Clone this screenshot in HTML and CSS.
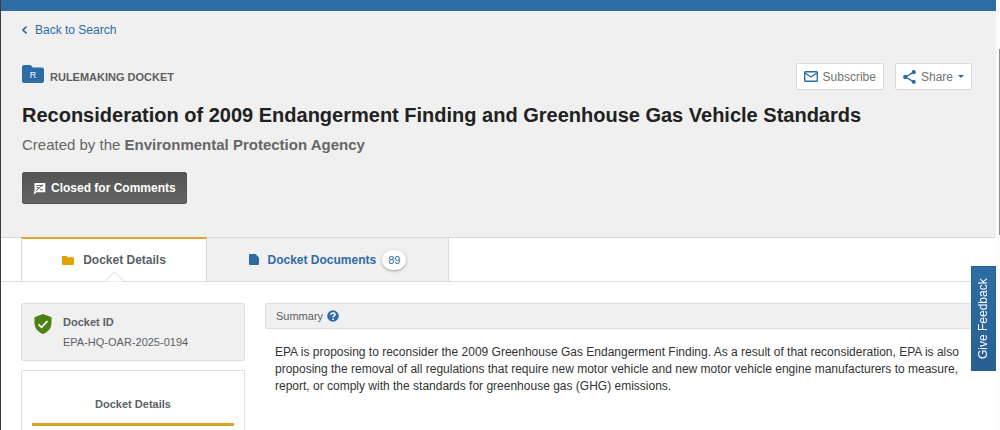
FILE: index.html
```html
<!DOCTYPE html>
<html lang="en">

<head>
    <meta charset="UTF-8">
    <meta name="viewport" content="width=device-width, initial-scale=1">
    <title>Reconsideration of 2009 Endangerment Finding and Greenhouse Gas Vehicle Standards</title>
    <link rel="stylesheet" href="styles.css">
</head>

<body>
    <div class="page">
        <div class="top-bar"></div>

        <header class="hero">
            <a href="#" class="back-link">
                <svg width="6" height="8" viewBox="0 0 6 8"><path d="M4.500 .6 1 4l3.500 3.400" fill="none" stroke="currentColor" stroke-width="1.600"/></svg>
                Back to Search
            </a>

            <div class="hero-row">
                <div class="docket-type">
                    <span class="folder-badge">
                        <svg width="22" height="18" viewBox="0 0 22 18"><path d="M2 0h6.500l2.500 2.500H20a2 2 0 0 1 2 2V16a2 2 0 0 1-2 2H2a2 2 0 0 1-2-2V2a2 2 0 0 1 2-2z" fill="#2e6da4"/></svg>
                        <span class="folder-letter">R</span>
                    </span>
                    <span class="type-name">RULEMAKING DOCKET</span>
                </div>
                <div class="actions">
                    <button type="button" class="btn-action">
                        <svg width="14" height="11" viewBox="0 0 14 11"><rect x=".7" y=".7" width="12.600" height="9.600" rx=".8" fill="none" stroke="#2e6da4" stroke-width="1.400"/><path d="M1 2l6 4 6-4" fill="none" stroke="#2e6da4" stroke-width="1.400"/></svg>
                        Subscribe
                    </button>
                    <button type="button" class="btn-action">
                        <svg width="13" height="14" viewBox="0 0 13 14"><path d="M10.500 2.300 2.500 7l8 4.700" fill="none" stroke="#2e6da4" stroke-width="1.400"/><g fill="#2e6da4"><circle cx="10.700" cy="2.200" r="2.100"/><circle cx="2.300" cy="7" r="2.200"/><circle cx="10.700" cy="11.800" r="2.100"/></g></svg>
                        Share
                        <span class="caret"></span>
                    </button>
                </div>
            </div>

            <h1>Reconsideration of 2009 Endangerment Finding and Greenhouse Gas Vehicle Standards</h1>
            <p class="created-by">Created by the <strong>Environmental Protection Agency</strong></p>

            <button type="button" class="btn-closed">
                <svg width="13" height="13" viewBox="0 0 13 13"><path d="M1.500 1h10.800v9.200H3.600L.5 12.800 1.500 9z" fill="#fff"/><path d="M3.500 3.500H10M3.500 5.700h3M7 7.700h3M2.800 9l7.400-6.500" fill="none" stroke="#5c5c5c"/></svg>
                Closed for Comments
            </button>
        </header>

        <nav class="tabs">
            <a href="#" class="tab active">
                <svg width="12" height="9" viewBox="0 0 12 9"><path d="M1 0h3.700l1.300 1.200h5a1 1 0 0 1 1 1V8a1 1 0 0 1-1 1H1a1 1 0 0 1-1-1V1a1 1 0 0 1 1-1z" fill="#e5a000"/></svg>
                Docket Details
            </a>
            <a href="#" class="tab">
                <svg width="10" height="11" viewBox="0 0 10 11"><path d="M1 0h5.600L10 3.400V10a1 1 0 0 1-1 1H1a1 1 0 0 1-1-1V1a1 1 0 0 1 1-1z" fill="#2e6da4"/></svg>
                <span class="tab-name">Docket Documents <span class="count">89</span></span>
            </a>
        </nav>

        <main class="content">
            <aside class="sidebar">
                <div class="docket-id">
                    <svg width="18" height="20" viewBox="0 0 18 20"><path d="M9 0l8.500 3.300V9c0 5-3.500 9.300-8.500 11C4 18.300.5 14 .5 9V3.300z" fill="#4d8015"/><path d="M4.500 10.300l3 3 6-6.300" fill="none" stroke="#fff" stroke-width="1.700"/></svg>
                    <div>
                        <h2>Docket ID</h2>
                        <p>EPA-HQ-OAR-2025-0194</p>
                    </div>
                </div>
                <div class="details-card">
                    <h2>Docket Details</h2>
                </div>
            </aside>

            <section class="summary">
                <div class="summary-head">
                    Summary
                    <svg width="12" height="12" viewBox="0 0 12 12"><circle cx="6" cy="6" r="5.800" fill="#2e6da4"/><path d="M4 4.700C4 2.300 8 2.400 8 4.600 8 5.900 6.100 5.800 6.100 7.300" fill="none" stroke="#fff" stroke-width="1.500"/><circle cx="6.100" cy="9.200" r=".9" fill="#fff"/></svg>
                </div>
                <p class="summary-text">EPA is proposing to reconsider the 2009 Greenhouse Gas Endangerment Finding. As a result of that reconsideration, EPA is also proposing the removal of all regulations that require new motor vehicle and new motor vehicle engine manufacturers to measure, report, or comply with the standards for greenhouse gas (GHG) emissions.</p>
            </section>
        </main>
    </div>

    <div class="scroll-gutter">
        <div class="scroll-thumb"></div>
    </div>

    <button type="button" class="feedback">Give Feedback</button>
</body>

</html>
```

FILE: styles.css
```css
* {
    margin: 0;
    padding: 0;
    box-sizing: border-box;
}

body {
    font-family: "Liberation Sans", Arial, sans-serif;
    font-size: 12px;
    color: #5b5f66;
    background-color: #fff;
    min-height: 100vh;
    display: flex;
    border-left: 1px solid #3f3c3c;
}

a {
    color: #2e6da4;
    text-decoration: none;
}

button {
    font-family: inherit;
    cursor: pointer;
}

svg {
    display: block;
    flex-shrink: 0;
}

.page {
    flex: 1;
    min-width: 0;
    display: flex;
    flex-direction: column;
}

.top-bar {
    height: 11px;
    background-color: #2e6da4;
}

/* Header */
.hero {
    background-color: #f0f0f0;
    padding: 12px 24px 33px 21px;
}

.back-link {
    display: inline-flex;
    align-items: center;
    gap: 7px;
    font-size: 12px;
    line-height: 14px;
}

.hero-row {
    display: flex;
    justify-content: space-between;
    margin-top: 26px;
}

.docket-type {
    display: flex;
    gap: 6px;
    padding-top: 2px;
}

.folder-badge {
    position: relative;
    height: 18px;
}

.folder-letter {
    position: absolute;
    top: 5px;
    left: 0;
    width: 100%;
    text-align: center;
    font-size: 9px;
    line-height: 10px;
    color: #fff;
}

.type-name {
    font-size: 11px;
    font-weight: bold;
    line-height: 14px;
    padding-top: 5px;
    color: #5f5f5f;
}

.actions {
    display: flex;
    gap: 11px;
}

.btn-action {
    display: flex;
    align-items: center;
    gap: 5px;
    height: 27px;
    padding: 0 7px;
    font-size: 12px;
    color: #737373;
    background-color: #fff;
    border: 1px solid #d9d9d9;
    border-radius: 2px;
}

.caret {
    border-top: 3px solid #2e6da4;
    border-left: 3px solid transparent;
    border-right: 3px solid transparent;
}

h1 {
    font-size: 20px;
    line-height: 26px;
    color: #212121;
    margin-top: 12px;
}

.created-by {
    font-size: 15px;
    line-height: 18px;
    margin-top: 8px;
    color: #666;
}

.btn-closed {
    display: flex;
    align-items: center;
    gap: 5px;
    height: 32px;
    margin-top: 18px;
    padding: 0 10px;
    font-size: 12px;
    font-weight: bold;
    color: #fff;
    background: linear-gradient(#545454, #646464);
    border: 1px solid #555;
    border-radius: 2px;
}

/* Tabs */
.tabs {
    display: flex;
    height: 45px;
    padding-left: 20px;
    border-top: 1px solid #d9d9d9;
    border-bottom: 1px solid #dedede;
}

.tab {
    position: relative;
    display: flex;
    align-items: center;
    justify-content: center;
    gap: 9px;
    width: 242px;
    background-color: #f0f0f0;
    border-right: 1px solid #d9d9d9;
    font-size: 12px;
    font-weight: bold;
}

.tab.active {
    width: 186px;
    margin-top: -1px;
    background-color: #fff;
    border-left: 1px solid #d9d9d9;
    border-top: 2px solid #e0a52c;
    color: #5b5f66;
}

/* notch under the active tab */
.tab.active::after {
    content: "";
    position: absolute;
    bottom: -8px;
    left: 50%;
    width: 14px;
    height: 14px;
    margin-left: -7px;
    background-color: #fff;
    border-top: 1px solid #d9d9d9;
    border-left: 1px solid #d9d9d9;
    transform: rotate(45deg);
    clip-path: polygon(0 0, 100% 0, 0 100%);
}

.tab-name {
    display: flex;
    align-items: center;
    gap: 6px;
}

.count {
    padding: 0 6px;
    line-height: 20px;
    font-size: 11px;
    font-weight: normal;
    background-color: #fff;
    border-radius: 10px;
    box-shadow: 0 1px 3px rgba(0, 0, 0, 0.35);
}

/* Content */
.content {
    flex: 1;
    display: flex;
    gap: 20px;
    padding: 21px 22px 0 20px;
}

.sidebar {
    display: flex;
    flex-direction: column;
    width: 224px;
    flex-shrink: 0;
}

.docket-id {
    display: flex;
    gap: 11px;
    height: 58px;
    padding: 10px 12px;
    background-color: #f0f0f0;
    border: 1px solid #dedede;
    border-radius: 2px;
}

.sidebar h2 {
    font-size: 11px;
    line-height: 16px;
}

.docket-id p {
    font-size: 11px;
    line-height: 16px;
    margin-top: 4px;
}

.details-card {
    flex: 1;
    margin-top: 9px;
    padding: 25px 10px 0;
    border: 1px solid #dedede;
    border-bottom: 0;
    border-radius: 2px 2px 0 0;
    text-align: center;
}

.details-card h2 {
    padding-bottom: 11px;
    border-bottom: 3px solid #d9a42a;
}

.summary {
    flex: 1;
    min-width: 0;
}

.summary-head {
    display: flex;
    align-items: center;
    gap: 4px;
    height: 26px;
    padding: 0 10px;
    font-size: 11px;
    background-color: #f0f0f0;
    border: 1px solid #dedede;
    border-radius: 2px;
}

.summary-text {
    padding: 15px 10px 0;
    font-size: 12px;
    line-height: 17px;
    color: #333;
}

/* Scroll bar */
.scroll-gutter {
    width: 4px;
    padding: 49px 0 0 3px;
    background-color: #fcfcfc;
}

.scroll-thumb {
    height: 186px;
    background-color: #8f8f8f;
}

.feedback {
    position: fixed;
    top: 266px;
    right: 4px;
    width: 25px;
    height: 105px;
    writing-mode: vertical-rl;
    transform: rotate(180deg);
    font-size: 12px;
    text-align: center;
    color: #fff;
    background: linear-gradient(#285f92, #2e6da4);
    border: 1px solid #285f92;
}
```
